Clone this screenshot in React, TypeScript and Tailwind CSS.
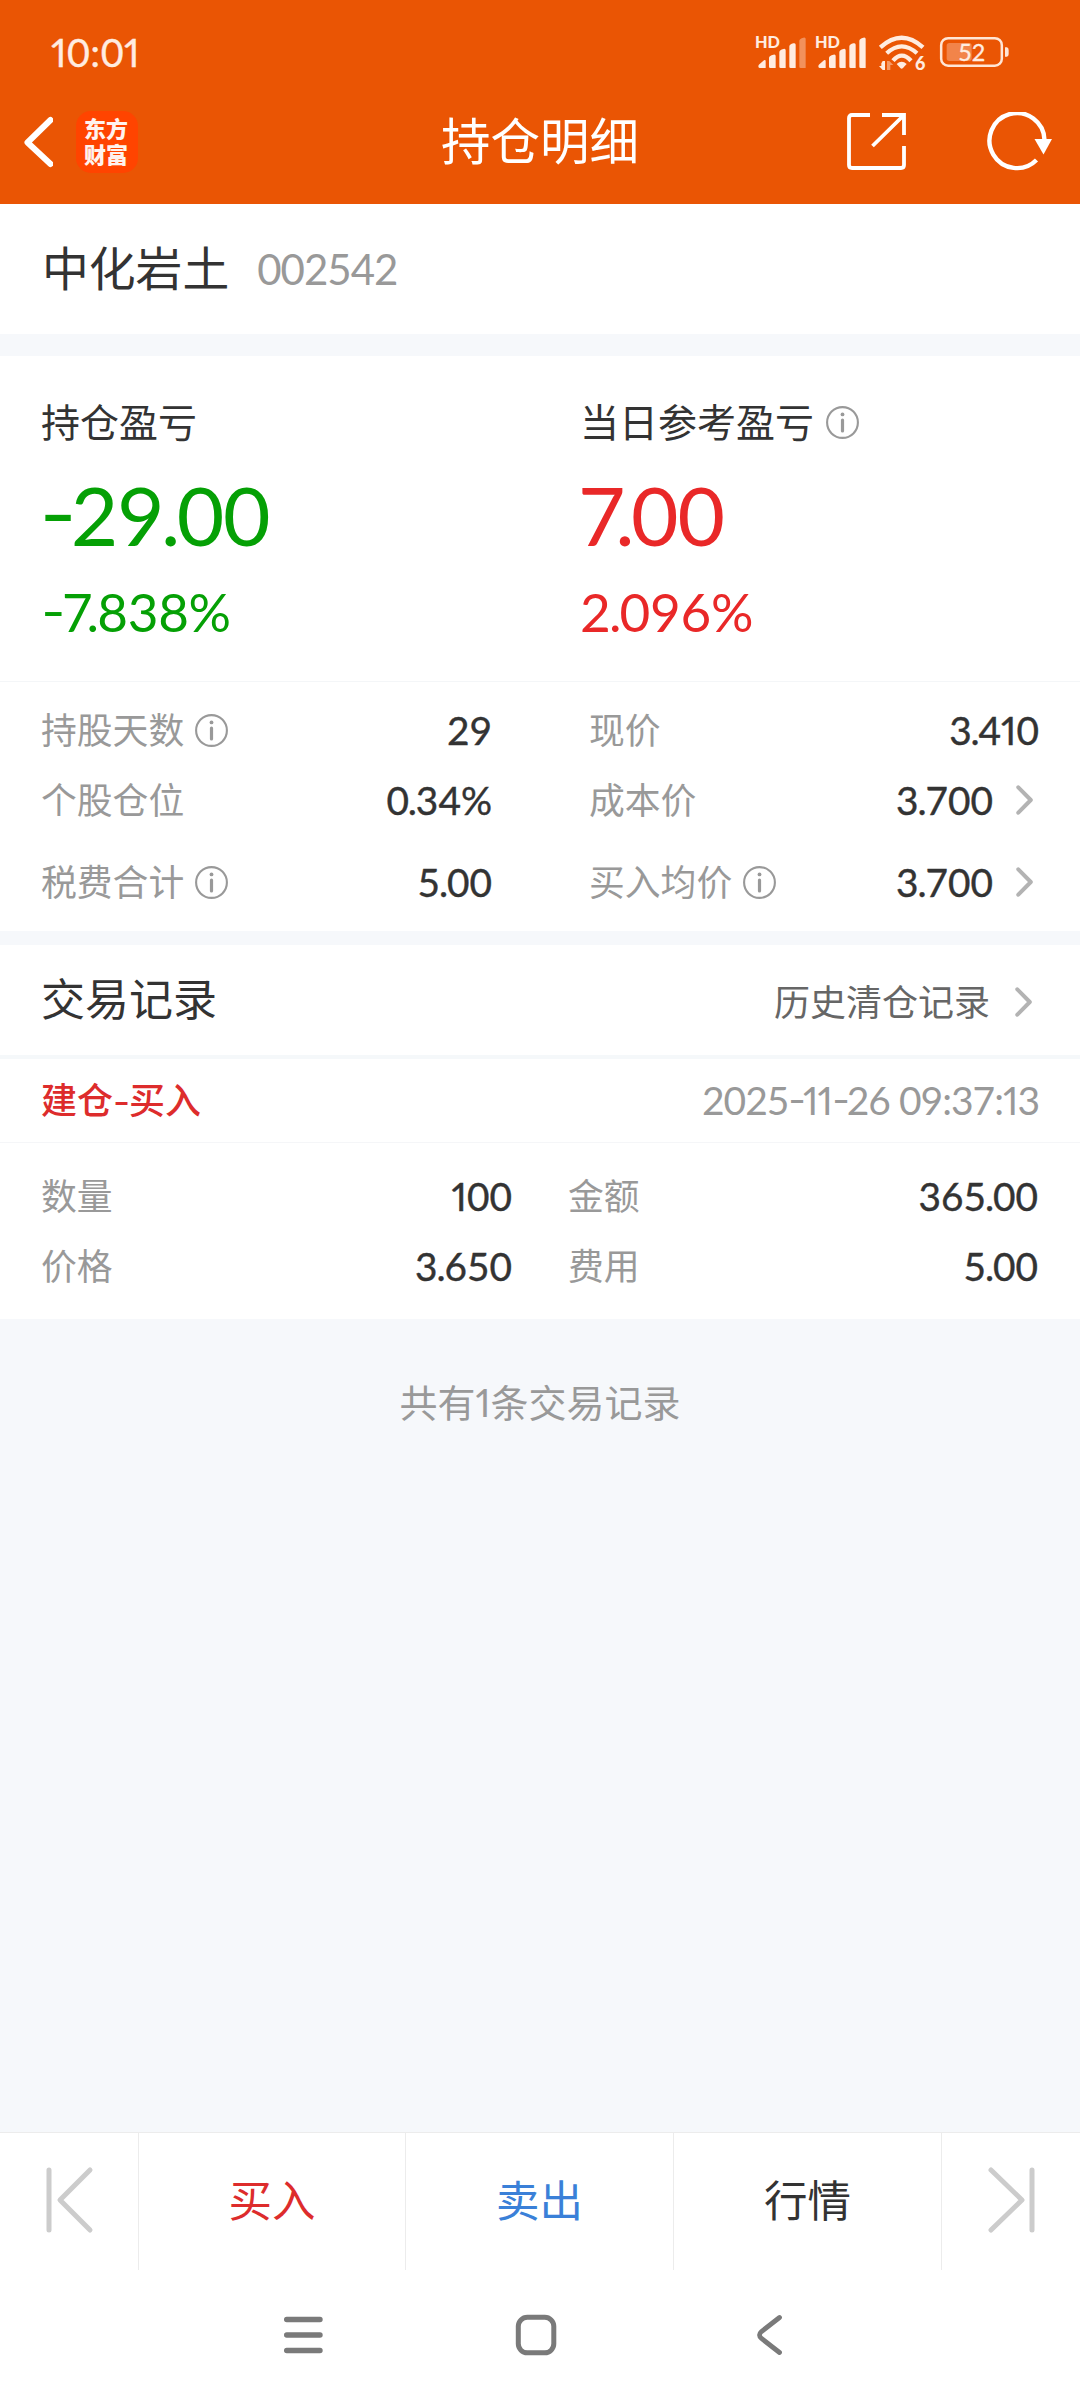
import React from "react";

const lato = "font-['Lato','Liberation_Sans',sans-serif]";

/** Numeric text with narrow ones, tight decimal points and wide dashes. */
function Num({ children, className = "" }: { children: string; className?: string }) {
  const chars = children.split("");
  return (
    <span className={`${lato} whitespace-pre leading-none tabular-nums ${className}`}>
      {chars.map((c, i) => {
        if (c === "1") {
          return (
            <span key={i} className="[font-variant-numeric:proportional-nums]">
              {c}
            </span>
          );
        }
        if (c === ".") {
          return (
            <span key={i} className={chars[i - 1] === "7" ? "-ml-[0.11em] -mr-[0.03em]" : "-mx-[0.03em]"}>
              {c}
            </span>
          );
        }
        if (c === "-") {
          return (
            <span key={i} className="mr-[0.03em] inline-block origin-left scale-x-125 [font-feature-settings:'case']">
              {c}
            </span>
          );
        }
        return c;
      })}
    </span>
  );
}

function InfoIcon() {
  return (
    <svg width="33" height="33" viewBox="0 0 33 33" fill="none" className="shrink-0">
      <circle cx="16.5" cy="16.5" r="15.4" stroke="#999" strokeWidth="2.1" />
      <circle cx="16.5" cy="8.4" r="1.9" fill="#999" />
      <path d="M16.5 14V25" stroke="#999" strokeWidth="3.2" strokeLinecap="round" />
    </svg>
  );
}

function Chevron() {
  return (
    <svg width="18" height="30" viewBox="0 0 18 30" fill="none" className="shrink-0">
      <path d="M2.3 2.3L14.8 15L2.3 27.7" stroke="#b3b3b3" strokeWidth="4" strokeLinecap="round" strokeLinejoin="round" />
    </svg>
  );
}

function Signal({ weak }: { weak?: boolean }) {
  return (
    <svg width="52" height="39" viewBox="105 99 156 117" fill="#ffece0" className="overflow-visible">
      <text x="105" y="144" fontSize="49" fontWeight="900" fontFamily="Lato" textLength="75" lengthAdjust="spacingAndGlyphs">
        HD
      </text>
      <path d="M115 199Q115 195 119 192L132 181Q137 178 137 184V204H119Q115 204 115 199Z" />
      <path d="M147 173Q148 167 160 164Q167 162 167 168V204H151Q147 204 147 200Z" />
      <path d="M178 156Q179 150 190 147Q197 145 197 151V204H182Q178 204 178 200Z" />
      <path d="M208 139Q209 133 220 130Q227 128 227 134V204H212Q208 204 208 200Z" />
      <path d="M238 122Q239 116 250 113Q257 111 257 117V204H242Q238 204 238 200Z" opacity={weak ? 0.4 : 1} />
    </svg>
  );
}

function Wifi() {
  return (
    <svg width="50" height="39" viewBox="471 99 150 117" fill="none" stroke="#ffece0" className="overflow-visible">
      <path d="M481 142Q545 84 609 142" strokeWidth="13" />
      <path d="M500 160Q545 118 591 160" strokeWidth="12.5" />
      <path d="M519 182Q545 152 573 182" strokeWidth="13" />
      <path d="M530 192Q545 178 560 192L549 204Q545 208 541 204Z" fill="#ffece0" stroke="none" />
      <path d="M488 183V210L477 198H484V190ZM488 183H495V210H488Z" fill="#ffece0" stroke="none" />
      <path d="M501 183H508L520 195H511V210H501Z" fill="#f59a66" stroke="none" />
      <text x="585" y="211" fontSize="54" fontWeight="900" fontFamily="Lato" fill="#ffece0" stroke="none">
        6
      </text>
    </svg>
  );
}

function Battery() {
  return (
    <svg width="71" height="39" viewBox="657 99 213 117" fill="none" className="overflow-visible">
      <rect x="663.5" y="114.500" width="182" height="82.500" rx="21" stroke="#ffe6d6" strokeWidth="7.500" />
      <rect x="680" y="129" width="75" height="54" rx="8" fill="#f2844a" />
      <path d="M855 142H861Q866 144 866 150V162Q866 168 861 170H855Z" fill="#ffe6d6" />
      <text x="755" y="182" fontSize="70" fontFamily="Lato" fill="#ffece0" stroke="#ffece0" strokeWidth="1" textAnchor="middle">
        52
      </text>
    </svg>
  );
}

function Header() {
  return (
    <header className="h-[204px] bg-[#ea5504]">
      <div className="flex h-[105px] items-center justify-between pl-[51px] pr-[70px]">
        <Num className="pb-[2px] text-[39.500px] tracking-[0.4px] text-[#ffece0] [-webkit-text-stroke:0.3px_#ffece0]">10:01</Num>
        <div className="flex items-center">
          <Signal weak />
          <div className="w-2" />
          <Signal />
          <div className="w-[10px]" />
          <Wifi />
          <div className="w-3" />
          <Battery />
        </div>
      </div>
      <div className="grid h-[73px] grid-cols-[1fr_auto_1fr] items-center">
        <div className="flex items-center pl-[22px]">
          <svg width="31" height="52" viewBox="0 0 31 52" fill="none">
            <path d="M28.500 4L5.500 26.500L28.500 48" stroke="#fff" strokeWidth="6" strokeLinecap="round" strokeLinejoin="round" />
          </svg>
          <div className="ml-[23px] flex h-[62px] w-[62px] items-center justify-center rounded-[15px] bg-[#ff4400] pb-[4px] pr-[2px] text-[22px] font-black leading-[26px] text-[#fff3ee]">
            <span>
              东方
              <br />
              财富
            </span>
          </div>
        </div>
        <h1 className="pb-[5px] text-[49.500px] leading-none text-white">持仓明细</h1>
        <div className="flex items-center justify-end gap-[79px] pr-[26px]">
          <svg width="60" height="60" viewBox="0 0 60 60" fill="none" stroke="#fff" strokeWidth="3.800">
            <path d="M24 3H6Q3 3 3 6V53Q3 56 6 56H55Q58 56 58 53V34" />
            <path d="M36 3H58V23M57 4L26.500 34" />
          </svg>
          <svg width="69" height="60" viewBox="0 0 69 60" fill="none">
            <path d="M59.500 28A27.500 27.500 0 1 0 51.500 48" stroke="#fff" strokeWidth="4.400" />
            <path d="M49.500 27H67L58.500 42.500Z" fill="#fff" />
          </svg>
        </div>
      </div>
    </header>
  );
}

function Stat({ label, value, info, link }: { label: string; value: string; info?: boolean; link?: boolean }) {
  return (
    <div className="flex h-[70px] items-center">
      <span className="pb-[3px] text-[35.800px] leading-none text-[#999]">{label}</span>
      {info && (
        <span className="ml-[11px]">
          <InfoIcon />
        </span>
      )}
      <Num className="ml-auto text-[38.800px] text-[#333] [-webkit-text-stroke:0.4px_#333]">{value}</Num>
      {link && (
        <span className="ml-[23px] mr-[5px]">
          <Chevron />
        </span>
      )}
    </div>
  );
}

function Profit({ label, amount, rate, info, tone }: { label: string; amount: string; rate: string; info?: boolean; tone: string }) {
  return (
    <div className="flex flex-col">
      <div className="-ml-px flex h-[60px] items-center text-[39px] leading-none text-[#333]">
        <span className="pb-[3px]">{label}</span>
        {info && (
          <span className="ml-[12px]">
            <InfoIcon />
          </span>
        )}
      </div>
      <div className={`${tone} -ml-[3px] flex h-[123px] items-center`}>
        <Num className="text-[82px] tracking-[-1.200px]">{amount}</Num>
      </div>
      <div className={`${tone} -ml-px flex h-[73px] items-center`}>
        <Num className="text-[53px] tracking-[-0.3px]">{rate}</Num>
      </div>
    </div>
  );
}

export default function App() {
  return (
    <div className="flex h-[2400px] w-[1080px] flex-col overflow-hidden bg-[#f6f8fb] font-['Noto_Sans_CJK_SC',sans-serif]">
      <Header />

      <section className="flex h-[130px] items-center bg-white pl-[42px]">
        <span className="pb-[6px] text-[46.800px] leading-none text-[#333]">中化岩土</span>
        <Num className="ml-[28px] text-[42px] tracking-[-1px] text-[#999]">002542</Num>
      </section>

      <section className="mt-[22px] h-[575px] bg-white">
        <div className="grid h-[326px] grid-cols-[539px_1fr] border-b border-[#f4f6f8] pl-[42px] pt-[36px]">
          <Profit label="持仓盈亏" amount="-29.00" rate="-7.838%" tone="text-[#05a005]" />
          <Profit label="当日参考盈亏" amount="7.00" rate="2.096%" info tone="text-[#e92828]" />
        </div>
        <div className="grid grid-cols-[451px_450px] justify-between pl-[41px] pr-[41px] pt-[13px]">
          <Stat label="持股天数" value="29" info />
          <Stat label="现价" value="3.410" />
          <Stat label="个股仓位" value="0.34%" />
          <Stat label="成本价" value="3.700" link />
          <div className="mt-3">
            <Stat label="税费合计" value="5.00" info />
          </div>
          <div className="mt-3">
            <Stat label="买入均价" value="3.700" info link />
          </div>
        </div>
      </section>

      <section className="mt-[14px] h-[374px] bg-white">
        <div className="flex h-[114px] items-center justify-between border-b-4 border-[#f5f8fa] pl-[41px] pr-[47px]">
          <h2 className="pb-[6px] text-[44px] leading-none text-[#333]">交易记录</h2>
          <div className="flex items-center pt-1">
            <span className="pb-[4px] text-[36px] leading-none text-[#666]">历史清仓记录</span>
            <span className="ml-[25px]">
              <Chevron />
            </span>
          </div>
        </div>
        <div className="flex h-[84px] items-center justify-between border-b border-[#f5f6f8] pl-[41px] pr-[41px]">
          <span className="pb-[5px] text-[36px] font-medium leading-none text-[#dd2c2c]">
            建仓<span className="mx-[1.500px] inline-block scale-x-125">-</span>买入
          </span>
          <Num className="text-[39px] tracking-[-1px] text-[#999]">2025-11-26 09:37:13</Num>
        </div>
        <div className="grid grid-cols-[471px_470px] justify-between pl-[41px] pr-[42px] pt-[18px]">
          <Stat label="数量" value="100" />
          <Stat label="金额" value="365.00" />
          <Stat label="价格" value="3.650" />
          <Stat label="费用" value="5.00" />
        </div>
      </section>

      <p className="mt-[62px] text-center text-[38px] leading-[40px] text-[#999]">
        共有<Num>1</Num>条交易记录
      </p>

      <footer className="mt-auto bg-white">
        <div className="grid h-[138px] grid-cols-[139px_267px_268px_268px_1fr] border-t border-[#ececec] text-[43.500px] leading-none *:flex *:items-center *:justify-center *:border-[#ececec] *:pb-[5px]">
          <div className="border-r">
            <svg width="50" height="70" viewBox="0 0 50 70" fill="none" stroke="#ccc" strokeWidth="5" strokeLinecap="round" strokeLinejoin="round">
              <path d="M5 6V66M46 6L16 36L46 66" />
            </svg>
          </div>
          <div className="border-r text-[#dd2c2c]">买入</div>
          <div className="border-r text-[#3a80d8]">卖出</div>
          <div className="border-r text-[#333]">行情</div>
          <div>
            <svg width="50" height="70" viewBox="0 0 50 70" fill="none" stroke="#ccc" strokeWidth="5" strokeLinecap="round" strokeLinejoin="round">
              <path d="M46 6V66M5 6L36 36L5 66" />
            </svg>
          </div>
        </div>
        <nav className="flex h-[130px] items-center pl-[283px]">
          <svg width="40" height="42" viewBox="0 0 40 42" stroke="#7a7a7a" strokeWidth="5.400" strokeLinecap="round">
            <path d="M3.700 5.500H37M3.700 21H37M3.700 36.500H37" />
          </svg>
          <svg width="42" height="42" viewBox="0 0 42 42" fill="none" className="ml-[192px]">
            <rect x="3.300" y="3.300" width="35.500" height="35.500" rx="9" stroke="#7a7a7a" strokeWidth="5" />
          </svg>
          <svg width="28" height="42" viewBox="0 0 28 42" fill="none" className="ml-[199px]">
            <path d="M23.500 3.500L5.500 17.500Q1.500 21 5.500 24.500L23.500 38.500" stroke="#7a7a7a" strokeWidth="4.800" strokeLinecap="round" />
          </svg>
        </nav>
      </footer>
    </div>
  );
}
